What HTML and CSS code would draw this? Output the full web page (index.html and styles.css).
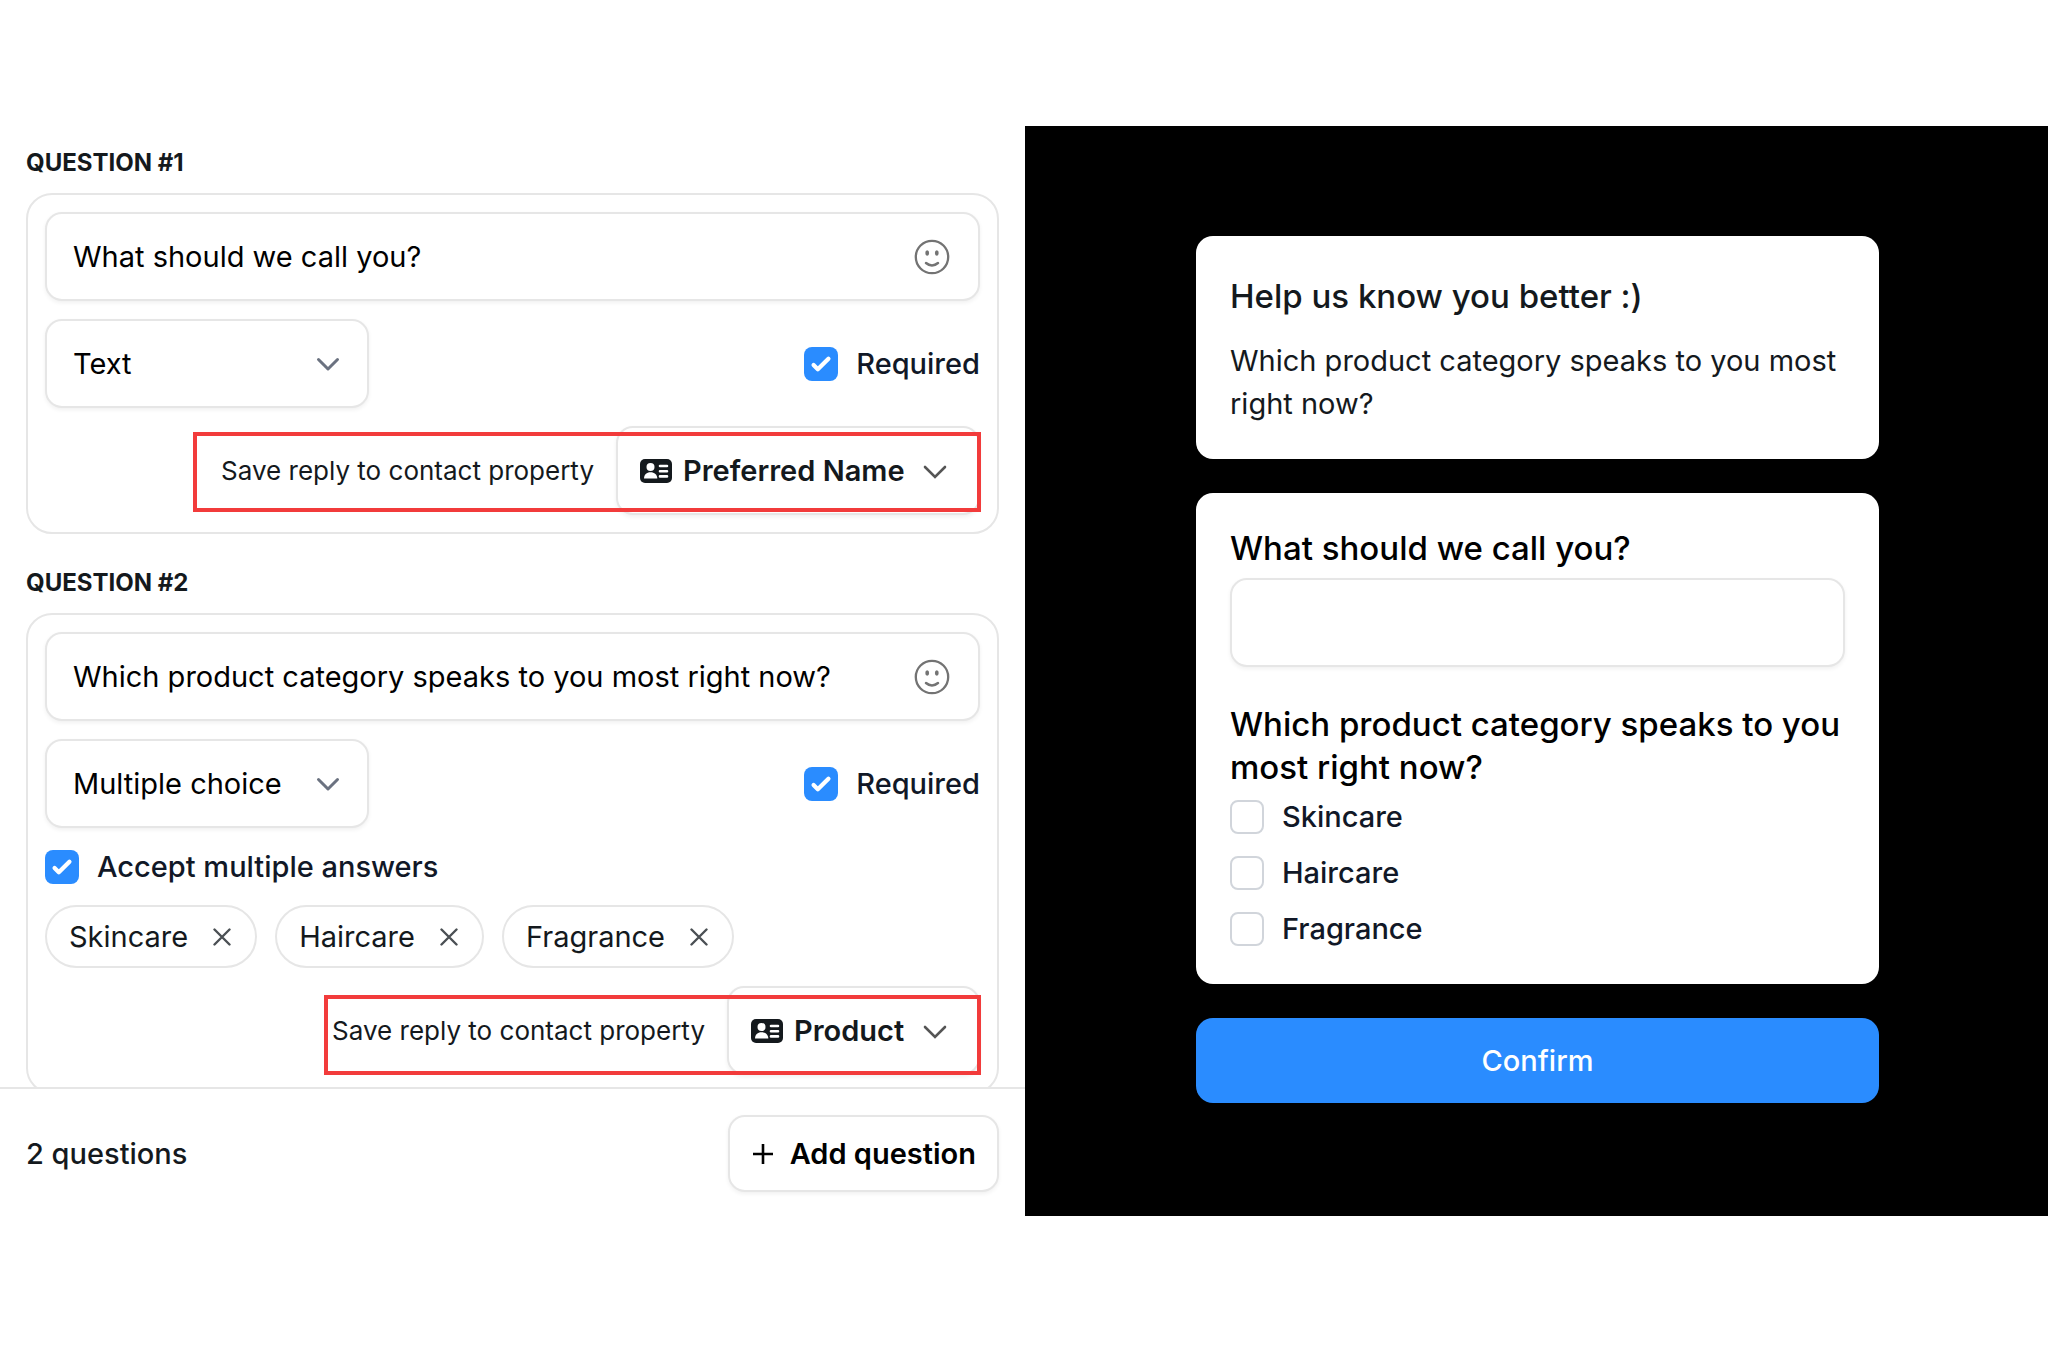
FILE: index.html
```html
<!DOCTYPE html>
<html lang="en">
<head>
<meta charset="utf-8">
<title>Form questions</title>
<link rel="stylesheet" href="styles.css">
</head>
<body>
<svg class="sprite" aria-hidden="true">
  <symbol id="smile" viewBox="0 0 38 38">
    <circle cx="19" cy="19" r="16.200" fill="none" stroke="currentColor" stroke-width="2.300"/>
    <ellipse cx="14.200" cy="15" rx="1.900" ry="2.700" fill="currentColor"/>
    <ellipse cx="23.800" cy="15" rx="1.900" ry="2.700" fill="currentColor"/>
    <path d="M13 25q6 5 12 0" fill="none" stroke="currentColor" stroke-width="2.500" stroke-linecap="round"/>
  </symbol>
  <symbol id="chevron" viewBox="0 0 24 24">
    <path d="M2.500 7.500 12 17l9.500-9.500" fill="none" stroke="currentColor" stroke-linecap="round" stroke-linejoin="round"/>
  </symbol>
  <symbol id="chevron-thin" viewBox="0 0 24 24">
    <path d="M2 8 12 18 22 8" fill="none" stroke="currentColor" stroke-width="2.600" stroke-linecap="round"/>
  </symbol>
  <symbol id="close" viewBox="0 0 18 18">
    <path d="M1.500 1.500l15 15M16.500 1.500l-15 15" fill="none" stroke="currentColor" stroke-width="2.400" stroke-linecap="round"/>
  </symbol>
  <symbol id="plus" viewBox="0 0 22 22">
    <path d="M11 1v20M1 11h20" fill="none" stroke="currentColor" stroke-width="2.600"/>
  </symbol>
  <symbol id="contact" viewBox="0 0 32 24">
    <rect width="32" height="24" rx="5" fill="currentColor"/>
    <circle cx="10.500" cy="8" r="4" fill="#fff"/>
    <path d="M4 19.500c0-4 2.600-6.300 6.500-6.300s6.800 2.300 6.800 6.300z" fill="#fff"/>
    <path d="M20 7h7M20 12.200h7M20 17.400h7" stroke="#fff" stroke-width="2.600" stroke-linecap="round"/>
  </symbol>
</svg>

<div class="app">
  <section class="editor">
    <div class="questions">
      <h2 class="question-heading">QUESTION #1</h2>
      <div class="question-card">
        <div class="field">
          <input type="text" value="What should we call you?" aria-label="Question 1">
          <button type="button" class="icon-button" aria-label="Insert emoji"><svg class="smile"><use href="#smile"/></svg></button>
        </div>
        <div class="row">
          <div class="field type-field">
            <select aria-label="Question 1 type"><option>Text</option></select>
            <svg class="chevron"><use href="#chevron"/></svg>
          </div>
          <label class="check"><input type="checkbox" checked>Required</label>
        </div>
        <div class="save highlight-wide">
          <label for="property-1">Save reply to contact property</label>
          <div class="field property-field">
            <svg class="contact"><use href="#contact"/></svg>
            <select id="property-1"><option>Preferred Name</option></select>
            <svg class="chevron"><use href="#chevron-thin"/></svg>
          </div>
        </div>
      </div>

      <h2 class="question-heading">QUESTION #2</h2>
      <div class="question-card">
        <div class="field">
          <input type="text" value="Which product category speaks to you most right now?" aria-label="Question 2">
          <button type="button" class="icon-button" aria-label="Insert emoji"><svg class="smile"><use href="#smile"/></svg></button>
        </div>
        <div class="row">
          <div class="field type-field">
            <select aria-label="Question 2 type"><option>Multiple choice</option></select>
            <svg class="chevron"><use href="#chevron"/></svg>
          </div>
          <label class="check"><input type="checkbox" checked>Required</label>
        </div>
        <label class="check"><input type="checkbox" checked>Accept multiple answers</label>
        <div class="chips">
          <span class="chip">Skincare<button type="button" class="icon-button" aria-label="Remove Skincare"><svg class="close"><use href="#close"/></svg></button></span>
          <span class="chip">Haircare<button type="button" class="icon-button" aria-label="Remove Haircare"><svg class="close"><use href="#close"/></svg></button></span>
          <span class="chip">Fragrance<button type="button" class="icon-button" aria-label="Remove Fragrance"><svg class="close"><use href="#close"/></svg></button></span>
        </div>
        <div class="save highlight-narrow">
          <label for="property-2">Save reply to contact property</label>
          <div class="field property-field">
            <svg class="contact"><use href="#contact"/></svg>
            <select id="property-2"><option>Product</option></select>
            <svg class="chevron"><use href="#chevron-thin"/></svg>
          </div>
        </div>
      </div>
    </div>
    <footer class="editor-footer">
      <span class="count">2 questions</span>
      <button type="button" class="add-button"><svg class="plus"><use href="#plus"/></svg>Add question</button>
    </footer>
  </section>

  <section class="preview">
    <form class="preview-form">
      <div class="preview-card">
        <h1 class="preview-title">Help us know you better :)</h1>
        <p class="preview-text">Which product category speaks to you most right now?</p>
      </div>
      <div class="preview-card">
        <label class="preview-label" for="answer">What should we call you?</label>
        <input id="answer" class="answer" type="text">
        <fieldset class="options">
          <legend class="preview-label">Which product category speaks to you most right now?</legend>
          <div class="option-list">
            <label class="check"><input type="checkbox">Skincare</label>
            <label class="check"><input type="checkbox">Haircare</label>
            <label class="check"><input type="checkbox">Fragrance</label>
          </div>
        </fieldset>
      </div>
      <button type="button" class="confirm">Confirm</button>
    </form>
  </section>
</div>
</body>
</html>
```

FILE: styles.css
```css
:root {
  --ink: #14191d;
  --line: #e6e6e6;
  --blue: #2a8cff;
}

* { box-sizing: border-box; }

body {
  margin: 0;
  height: 100vh;
  padding: 126px 0 136px;
  background: #fff;
  color: var(--ink);
  font-family: Inter, "Liberation Sans", sans-serif;
  font-optical-sizing: none;
  font-size: 29px;
  line-height: 43px;
}

input, select, button { font: inherit; color: inherit; }
button { cursor: pointer; }
.sprite { display: none; }

.app {
  display: grid;
  grid-template-columns: 1025fr 1023fr;
  height: 100%;
}

.editor {
  display: flex;
  flex-direction: column;
  min-width: 0;
  min-height: 0;
}

.questions {
  flex: 1;
  min-height: 0;
  padding: 17px 26px 0;
  overflow-y: auto;
  scrollbar-width: none;
}

.question-heading {
  margin: 0 0 10px;
  font-size: 24px;
  font-weight: 700;
  line-height: 40px;
}

.question-card {
  display: flex;
  flex-direction: column;
  gap: 18px;
  margin-bottom: 29px;
  padding: 17px;
  border: 2px solid var(--line);
  border-radius: 26px;
}

.field {
  display: flex;
  align-items: center;
  height: 89px;
  padding: 0 27px 0 26px;
  border: 2px solid var(--line);
  border-radius: 17px;
  background: #fff;
  color: #000;
  box-shadow: 0 2px 4px rgba(0, 0, 0, 0.06);
}

.field input,
.field select {
  flex: 1;
  min-width: 0;
  height: 100%;
  padding: 0;
  border: 0;
  outline: 0;
  background: none;
  appearance: none;
}

.icon-button {
  display: flex;
  padding: 0;
  border: 0;
  background: none;
}

.smile { width: 38px; height: 38px; color: #737373; }
.chevron { width: 24px; height: 24px; color: #6b7280; stroke-width: 3px; }
.close { width: 18px; height: 18px; color: #4b5054; }
.plus { width: 22px; height: 22px; }
.contact { width: 32px; height: 24px; }

.row {
  display: flex;
  align-items: center;
  justify-content: space-between;
}

.type-field { width: 324px; }

.check {
  display: flex;
  align-items: center;
  gap: 18px;
  color: #111827;
  font-weight: 500;
}

.check input {
  width: 34px;
  height: 34px;
  margin: 0;
  border: 2px solid #d1d5db;
  border-radius: 8px;
  background: #fff;
  appearance: none;
}

.check input:checked {
  border: 0;
  background: var(--blue) url("data:image/svg+xml,%3Csvg xmlns='http://www.w3.org/2000/svg' viewBox='0 0 16 16'%3E%3Cpath fill='%23fff' d='M12.207 4.793a1 1 0 010 1.414l-5 5a1 1 0 01-1.414 0l-2-2a1 1 0 011.414-1.414L6.500 9.086l4.293-4.293a1 1 0 011.414 0z'/%3E%3C/svg%3E") center / 100%;
}

.question-card > .check { height: 41px; }

.chips { display: flex; gap: 18px; }

.chip {
  display: flex;
  align-items: center;
  gap: 25px;
  height: 63px;
  padding: 0 24px 0 22px;
  border: 2px solid var(--line);
  border-radius: 32px;
}

.save {
  position: relative;
  display: flex;
  align-items: center;
  align-self: flex-end;
  gap: 22px;
  font-size: 26px;
}

.property-field {
  gap: 11px;
  padding: 0 31px 0 22px;
  color: var(--ink);
  font-size: 29px;
  font-weight: 600;
}

.property-field .chevron { margin-left: 7px; color: #555; }

/* Red marker drawn over the save row */
.save::after {
  content: "";
  position: absolute;
  border: 4px solid #f23b3b;
  pointer-events: none;
}

.highlight-wide::after { inset: 6px -1px 3px -28px; }
.highlight-narrow::after { inset: 9px -1px 0 -8px; }

.editor-footer {
  display: flex;
  align-items: center;
  justify-content: space-between;
  padding: 26px 26px 24px;
  border-top: 2px solid var(--line);
  background: #fff;
}

.count { font-weight: 500; }

.add-button {
  display: flex;
  align-items: center;
  gap: 16px;
  height: 77px;
  padding: 0 21px 0 22px;
  border: 2px solid var(--line);
  border-radius: 17px;
  background: #fff;
  color: #000;
  font-weight: 600;
  box-shadow: 0 2px 4px rgba(0, 0, 0, 0.06);
}

.preview {
  display: flex;
  flex-direction: column;
  align-items: center;
  justify-content: center;
  padding: 0 0 3px 2px;
  background: #000;
}

.preview-form {
  display: flex;
  flex-direction: column;
  gap: 34px;
  width: 67%;
  max-width: 683px;
}

.preview-card {
  padding: 34px;
  border-radius: 17px;
  background: #fff;
}

.preview-title {
  margin: 0 0 16px;
  font-size: 33px;
  font-weight: 500;
  line-height: 53px;
}

.preview-text { margin: 0; }

.preview-label {
  display: block;
  padding: 0;
  color: #000;
  font-size: 33px;
  font-weight: 500;
}

.answer {
  display: block;
  width: 100%;
  height: 89px;
  margin: 8px 0 36px;
  padding: 0 27px;
  border: 2px solid var(--line);
  border-radius: 17px;
  outline: 0;
  box-shadow: 0 2px 4px rgba(0, 0, 0, 0.06);
}

.options { margin: 0; padding: 0; border: 0; }

.option-list {
  display: flex;
  flex-direction: column;
  gap: 13px;
  padding-top: 6px;
}

.confirm {
  height: 85px;
  border: 0;
  border-radius: 17px;
  background: var(--blue);
  color: #fff;
  font-weight: 500;
}
```
